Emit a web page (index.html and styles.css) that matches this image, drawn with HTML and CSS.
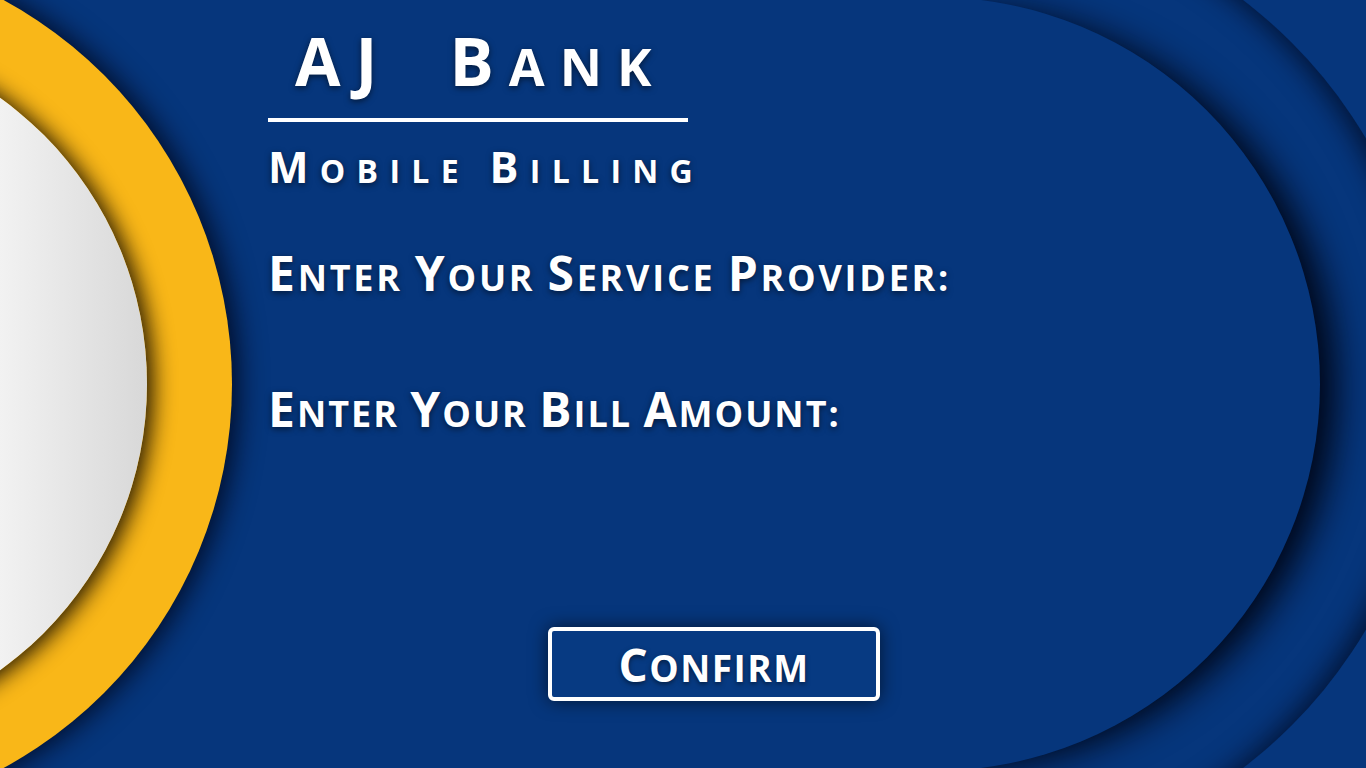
FILE: index.html
```html
<!DOCTYPE html>
<html lang="en">
<head>
<meta charset="utf-8">
<title>AJ Bank - Mobile Billing</title>
<link rel="stylesheet" href="styles.css">
</head>
<body>
<div class="stage">
  <div class="deco">
    <div class="ring-outer"></div>
    <div class="ring-inner"></div>
    <div class="gold"></div>
    <div class="pearl"></div>
  </div>
  <main class="panel">
    <h1 class="brand"><span class="cap">A</span><span class="cap">J</span>&nbsp;&nbsp;<span class="cap">B</span>ank</h1>
    <hr class="rule">
    <h2 class="sub"><span class="cap">M</span>obile <span class="cap">B</span>illing</h2>
    <p class="label first"><span class="cap">E</span>nter <span class="cap">Y</span>our <span class="cap">S</span>ervice <span class="cap">P</span>rovider:</p>
    <p class="label second"><span class="cap">E</span>nter <span class="cap">Y</span>our <span class="cap">B</span>ill <span class="cap">A</span>mount:</p>
    <button class="confirm" type="button"><span class="cap">C</span>onfirm</button>
  </main>
</div>
</body>
</html>
```
FILE: styles.css
```css
html, body {
  margin: 0;
  padding: 0;
  height: 100%;
}
body {
  background: #06367c;
  overflow: hidden;
  font-family: "Open Sans", "DejaVu Sans", sans-serif;
  color: #ffffff;
}
.stage {
  position: relative;
  width: 1366px;
  height: 768px;
  overflow: hidden;
}
.deco {
  position: absolute;
  inset: 0;
  pointer-events: none;
}
.ring-outer,
.ring-inner,
.gold,
.pearl {
  position: absolute;
  border-radius: 50%;
}
.ring-outer {
  left: 467px;
  top: -99px;
  width: 966px;
  height: 966px;
  background: #06367c;
  box-shadow: inset -16px 0 28px -6px rgba(0, 8, 30, 0.75);
  clip-path: inset(-200px -200px -200px 55%);
}
.ring-inner {
  left: 546px;
  top: -3px;
  width: 774px;
  height: 774px;
  background: #06367c;
  box-shadow: 24px 4px 36px -8px rgba(0, 5, 20, 1);
  clip-path: inset(-200px -200px -200px 50%);
}
.gold {
  left: -642px;
  top: -53px;
  width: 874px;
  height: 874px;
  background: #f9b718;
  box-shadow: 6px 0 28px rgba(0, 6, 25, 0.9);
}
.pearl {
  left: -557px;
  top: 32px;
  width: 704px;
  height: 704px;
  background: linear-gradient(90deg, #f7f7f7 75%, #d8d8d8 100%);
  box-shadow: 6px 2px 22px rgba(20, 12, 0, 0.95);
}
.panel {
  position: relative;
  display: flex;
  flex-direction: column;
  align-items: flex-start;
  padding-left: 268px;
  padding-top: 27px;
}
.brand,
.sub,
.label {
  margin: 0;
  font-weight: 700;
  text-transform: uppercase;
  line-height: 1;
  text-shadow: 0 2px 6px rgba(0, 0, 0, 0.55);
  white-space: nowrap;
}
.brand {
  font-size: 52px;
  letter-spacing: 15px;
  margin-left: 27px;
}
.brand .cap {
  font-size: 66px;
}
.rule {
  border: none;
  height: 4px;
  width: 420px;
  background: #ffffff;
  margin: 25px 0 0 0;
}
.sub {
  font-size: 32px;
  letter-spacing: 11.3px;
  margin-top: 23px;
}
.sub .cap {
  font-size: 43px;
}
.label {
  font-size: 36px;
  letter-spacing: 2.75px;
}
.label .cap {
  font-size: 48px;
}
.label.first {
  margin-top: 61px;
}
.label.second {
  margin-top: 88px;
  letter-spacing: 2px;
}
.confirm {
  margin-top: 194px;
  margin-left: 280px;
  width: 332px;
  height: 74px;
  box-sizing: border-box;
  border: 4px solid #ffffff;
  border-radius: 6px;
  background: #073a82;
  color: #ffffff;
  font-family: inherit;
  font-weight: 700;
  font-size: 37px;
  text-transform: uppercase;
  letter-spacing: 1.5px;
  line-height: 1;
  text-shadow: 0 2px 5px rgba(0, 0, 0, 0.5);
  box-shadow: 0 0 18px rgba(0, 0, 0, 0.6);
  padding: 0;
  cursor: pointer;
}
.confirm .cap {
  font-size: 46px;
}
```
